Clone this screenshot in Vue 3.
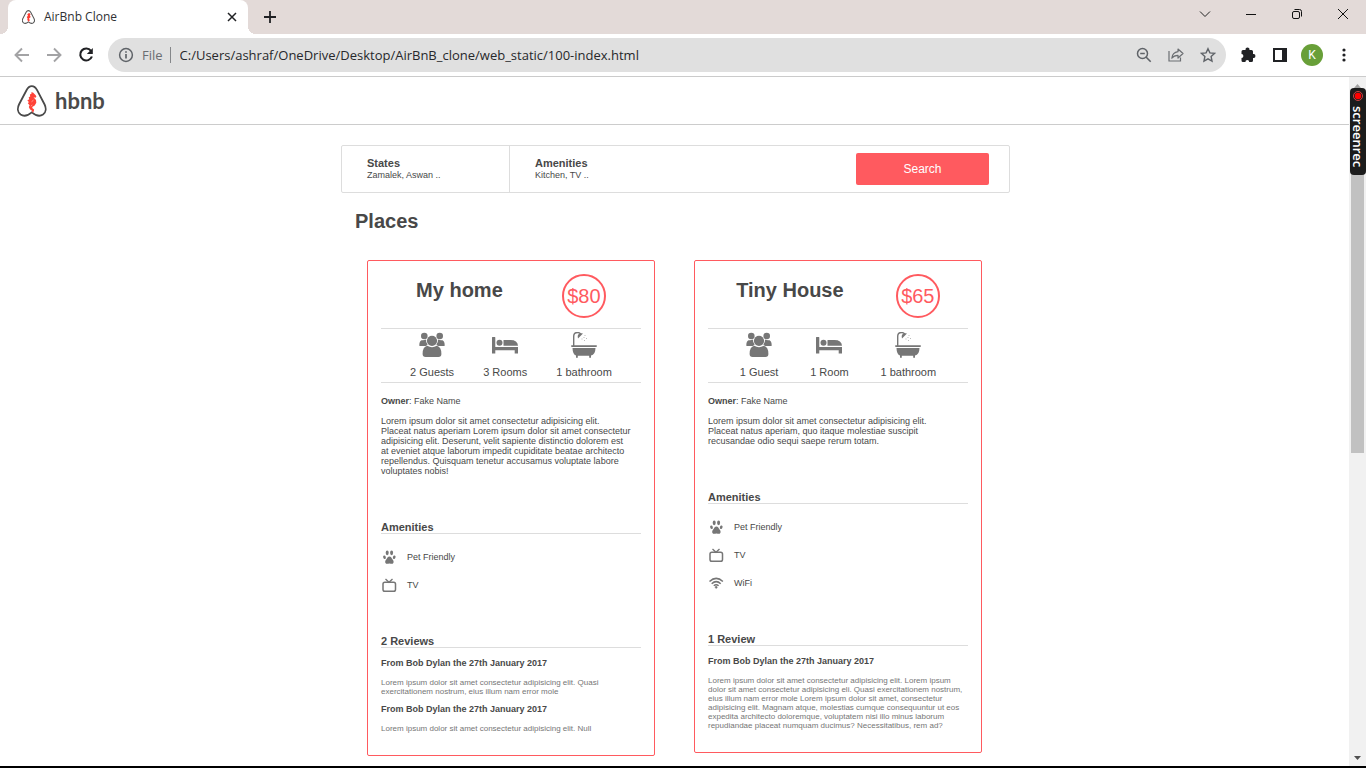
<script setup>
import { ref } from 'vue'

const address = ref('C:/Users/ashraf/OneDrive/Desktop/AirBnB_clone/web_static/100-index.html')

const places = [
  {
    name: 'My home',
    price: '$80',
    guests: '2 Guests',
    rooms: '3 Rooms',
    baths: '1 bathroom',
    description: [
      'Lorem ipsum dolor sit amet consectetur adipisicing elit.',
      'Placeat natus aperiam Lorem ipsum dolor sit amet consectetur',
      'adipisicing elit. Deserunt, velit sapiente distinctio dolorem est',
      'at eveniet atque laborum impedit cupiditate beatae architecto',
      'repellendus. Quisquam tenetur accusamus voluptate labore',
      'voluptates nobis!'
    ],
    amenities: [
      { icon: 'pet', label: 'Pet Friendly' },
      { icon: 'tv', label: 'TV' }
    ],
    reviewTitle: '2 Reviews',
    reviews: [
      {
        from: 'From Bob Dylan the 27th January 2017',
        text: [
          'Lorem ipsum dolor sit amet consectetur adipisicing elit. Quasi',
          'exercitationem nostrum, eius illum nam error mole'
        ]
      },
      {
        from: 'From Bob Dylan the 27th January 2017',
        text: ['Lorem ipsum dolor sit amet consectetur adipisicing elit. Null']
      }
    ]
  },
  {
    name: 'Tiny House',
    price: '$65',
    guests: '1 Guest',
    rooms: '1 Room',
    baths: '1 bathroom',
    description: [
      'Lorem ipsum dolor sit amet consectetur adipisicing elit.',
      'Placeat natus aperiam, quo itaque molestiae suscipit',
      'recusandae odio sequi saepe rerum totam.'
    ],
    amenities: [
      { icon: 'pet', label: 'Pet Friendly' },
      { icon: 'tv', label: 'TV' },
      { icon: 'wifi', label: 'WiFi' }
    ],
    reviewTitle: '1 Review',
    reviews: [
      {
        from: 'From Bob Dylan the 27th January 2017',
        text: [
          'Lorem ipsum dolor sit amet consectetur adipisicing elit. Lorem ipsum',
          'dolor sit amet consectetur adipisicing eli. Quasi exercitationem nostrum,',
          'eius illum nam error mole Lorem ipsum dolor sit amet, consectetur',
          'adipisicing elit. Magnam atque, molestias cumque consequuntur ut eos',
          'expedita architecto doloremque, voluptatem nisi illo minus laborum',
          'repudiandae placeat numquam ducimus? Necessitatibus, rem ad?'
        ]
      }
    ]
  }
]
</script>

<template>
  <div class="window">
    <div class="tabstrip">
      <div class="tab">
        <svg class="favicon" viewBox="0 0 30 32" width="13" height="14">
          <path d="M14.800 1.300C12 1.300 10.800 2.800 9.500 5.300L2 19.500C.2 23.200.6 27.500 3.600 29.600c3.200 2.100 7.400 1 11.200-2.200 3.800 3.200 8 4.300 11.200 2.200 3-2.100 3.400-6.400 1.600-10.100L20.100 5.300c-1.300-2.500-2.500-4-5.300-4z" fill="#fff" stroke="#555" stroke-width="2.400" />
          <path d="M14 8l3-1.500 3 3.500-2 2 2 4-4 4 2 3-2 4-4-4 1-3-2-4 3-3-2-2z" fill="#ff3b2f" />
        </svg>
        <span class="tab-title">AirBnb Clone</span>
        <button class="tab-close" aria-label="Close tab">
          <svg viewBox="0 0 10 10" width="10" height="10"><path d="M1 1l8 8M9 1L1 9" stroke="#202124" stroke-width="1.500" /></svg>
        </button>
      </div>
      <button class="new-tab" aria-label="New tab">
        <svg viewBox="0 0 12 12" width="12" height="12"><path d="M6 0v12M0 6h12" stroke="#202124" stroke-width="1.800" /></svg>
      </button>
      <div class="controls">
        <button aria-label="Search tabs"><svg viewBox="0 0 12 12" width="12" height="12"><path d="M1 3.500l5 5 5-5" fill="none" stroke="#222" stroke-width="1" /></svg></button>
        <button aria-label="Minimize"><svg viewBox="0 0 12 12" width="12" height="12"><path d="M1 6.500h10" stroke="#111" /></svg></button>
        <button aria-label="Restore"><svg viewBox="0 0 12 12" width="12" height="12"><rect x="1.500" y="3.500" width="7" height="7" rx="1.500" fill="none" stroke="#111" /><path d="M3.500 1.500h5a2 2 0 0 1 2 2v5" fill="none" stroke="#111" /></svg></button>
        <button aria-label="Close"><svg viewBox="0 0 12 12" width="12" height="12"><path d="M1 1l10 10M11 1L1 11" stroke="#111" stroke-width="1" /></svg></button>
      </div>
    </div>

    <div class="toolbar">
      <div class="nav">
        <button aria-label="Back"><svg viewBox="0 0 16 16" width="16" height="16"><path d="M15 8H2M8 1.500L1.500 8 8 14.500" fill="none" stroke="#a3a3a5" stroke-width="1.900" /></svg></button>
        <button aria-label="Forward"><svg viewBox="0 0 16 16" width="16" height="16"><path d="M1 8h13M8 1.500L14.500 8 8 14.500" fill="none" stroke="#a3a3a5" stroke-width="1.900" /></svg></button>
        <button aria-label="Reload"><svg viewBox="0 0 16 16" width="16" height="16"><path d="M13 3.800A6 6 0 1 0 13.900 9.500" fill="none" stroke="#202124" stroke-width="2.100" /><path d="M14.800 1v6h-6z" fill="#202124" /></svg></button>
      </div>
      <div class="omnibox">
        <svg viewBox="0 0 16 16" width="16" height="16"><circle cx="8" cy="8" r="6.400" fill="none" stroke="#5f6368" stroke-width="1.500" /><path d="M8 7v4.500M8 4.200v1.600" stroke="#5f6368" stroke-width="1.700" /></svg>
        <label class="scheme" for="address">File</label>
        <input id="address" v-model="address" class="address" type="text" spellcheck="false">
        <div class="omni-actions">
          <button aria-label="Zoom out"><svg viewBox="0 0 16 16" width="16" height="16"><circle cx="6.500" cy="6.500" r="5" fill="none" stroke="#5f6368" stroke-width="1.500" /><path d="M4.200 6.500h4.600M10 10l4.700 4.700" stroke="#5f6368" stroke-width="1.600" /></svg></button>
          <button aria-label="Share"><svg viewBox="0 0 16 16" width="16" height="16"><path d="M1 4v10h11.500v-3.500" fill="none" stroke="#6b6e72" stroke-width="1.200" /><path d="M10 2l5 4.500L10 11V8.300C7 8.300 5.200 9.200 3.800 11.200 4.200 7.800 6.300 5.200 10 4.700z" fill="none" stroke="#6b6e72" stroke-width="1.200" stroke-linejoin="round" /></svg></button>
          <button aria-label="Bookmark"><svg viewBox="0 0 16 16" width="16" height="16"><path d="M8 1.700l1.900 4.200 4.600.5-3.400 3.100.9 4.600L8 11.800l-4 2.300.9-4.600L1.500 6.400l4.600-.5z" fill="none" stroke="#5f6368" stroke-width="1.400" /></svg></button>
        </div>
      </div>
      <div class="tools">
        <button aria-label="Extensions"><svg viewBox="0 0 16 16" width="16" height="16"><path d="M1.500 4.500Q1.500 3 3 3h2.600a2 2 0 1 1 3.800 0h2.100Q13 3 13 4.500v2.600a2 2 0 1 1 0 3.900v2.500q0 1.500-1.500 1.500H9.200a1.900 1.900 0 0 0-3.800 0H3q-1.500 0-1.500-1.500v-2.600a1.900 1.900 0 0 0 0-3.800z" fill="#202124" /></svg></button>
        <button aria-label="Side panel"><svg viewBox="0 0 14 14" width="14" height="14"><path d="M0 0h14v14H0zM2 2v10h7V2z" fill="#202124" fill-rule="evenodd" /></svg></button>
        <button class="avatar" aria-label="Profile">K</button>
        <button aria-label="Menu"><svg viewBox="0 0 4 14" width="4" height="14"><circle cx="2" cy="2" r="1.600" fill="#202124" /><circle cx="2" cy="7" r="1.600" fill="#202124" /><circle cx="2" cy="12" r="1.600" fill="#202124" /></svg></button>
      </div>
    </div>

    <div class="viewport">
      <div class="page">
        <header class="site-header">
          <svg viewBox="0 0 30 32" width="30" height="32">
            <path d="M14.800 1.200C12 1.200 10.800 2.800 9.500 5.200L2 19.500C.2 23.200.6 27.500 3.600 29.600c3.200 2.100 7.400 1 11.200-2.200 3.800 3.200 8 4.300 11.200 2.200 3-2.100 3.400-6.400 1.600-10.100L20.100 5.200c-1.300-2.400-2.500-4-5.300-4z" fill="#fff" stroke="#4a4a4a" stroke-width="1.800" />
            <path d="M14.300 7.200l1.700.4 2.700 2.700.7 1.500-.9 1-2-.5 2.500 2.800.3 2.700-1.600 2.600-2.500 1.500.3 1.300 1.600 1.400-.3 1.900-1.800 1.300.2-1.800-2.300-1.700-1.100-2.300.8-1.700-1.800-2 1.100-1.300-1.600-1.600 1.900-1.200-.5-2 1.500-.7-.3-1.900 1.600-.8z" fill="#ff4338" />
            <path d="M14.500 16.800l2-1.700M13.800 21.200l1.500-1.200" stroke="#ffd4cf" stroke-width=".6" />
          </svg>
          <span class="brand">hbnb</span>
        </header>

        <main class="content">
          <section class="filters">
            <div class="filter states">
              <h3>States</h3>
              <h4>Zamalek, Aswan ..</h4>
            </div>
            <div class="filter">
              <h3>Amenities</h3>
              <h4>Kitchen, TV ..</h4>
            </div>
            <button class="search">Search</button>
          </section>

          <h1>Places</h1>
          <section class="places">
            <article v-for="place in places" :key="place.name" class="place">
              <div class="headline">
                <h2>{{ place.name }}</h2>
                <div class="price">{{ place.price }}</div>
              </div>
              <div class="facts">
                <div class="fact">
                  <svg viewBox="0 0 26 26" width="26" height="26" fill="#767676">
                    <circle cx="5.300" cy="4" r="3.300" /><circle cx="20.700" cy="4" r="3.300" />
                    <path d="M2.500 8.200q-2.200 1-2.200 5 0 .9.900.9h5.400Q8 13.700 8.600 12.500 6.700 10.500 7 7.600q-2 1-4.500.6zM23.500 8.200q2.200 1 2.200 5 0 .9-.9.900h-5.400q-1.400-.4-2-1.600 1.900-2 1.600-4.900 2 1 4.500.6z" />
                    <circle cx="13" cy="8.800" r="5.100" />
                    <path d="M8.200 13.800q4.800 2.800 9.600 0 4.600 1 4.600 8.200 0 3-3 3H6.600q-3 0-3-3 0-7.200 4.600-8.200z" />
                  </svg>
                  <span>{{ place.guests }}</span>
                </div>
                <div class="fact">
                  <svg viewBox="0 0 26 26" width="26" height="26" fill="#767676">
                    <path d="M0 5.500Q0 5 .5 5h2.300q.5 0 .5.500V15H26v6.500h-3.300v-3.200H3.300v3.200H0z" />
                    <circle cx="7.500" cy="10.700" r="3" />
                    <path d="M11.500 8h7q7 0 7.500 5.700H11.500z" />
                  </svg>
                  <span>{{ place.rooms }}</span>
                </div>
                <div class="fact">
                  <svg viewBox="0 0 26 26" width="26" height="26" fill="#767676">
                    <path d="M2.700 14V4.500q0-4 3.800-4 2.300 0 3.200 1.600" fill="none" stroke="#767676" stroke-width="1.400" />
                    <path d="M12 1.500L7 6.500Q6 3 8.200 1.800 10 .8 12 1.500z" />
                    <path d="M10.500 7h1M12.500 5.500h1M13.500 3.500h1M13 8.500h1M15 6.500h1" stroke="#bbb" />
                    <rect y="13.200" width="26" height="1.700" rx=".8" />
                    <path d="M1.500 16h23q-.2 7-4.500 7.500v2.300h-1.800v-2.100H6.800v2.100H5v-2.300Q1.700 22.500 1.500 16z" />
                  </svg>
                  <span>{{ place.baths }}</span>
                </div>
              </div>
              <p class="owner"><b>Owner</b>: Fake Name</p>
              <p class="description">{{ place.description.join('\n') }}</p>

              <h3 class="section-title">Amenities</h3>
              <ul class="amenities">
                <li v-for="item in place.amenities" :key="item.label">
                  <svg v-if="item.icon === 'pet'" viewBox="0 0 16 16" width="16" height="16" fill="#767676">
                    <ellipse cx="6.200" cy="3.800" rx="1.500" ry="2.400" /><ellipse cx="10.600" cy="3.800" rx="1.500" ry="2.400" />
                    <ellipse cx="3.500" cy="8.200" rx="1.300" ry="1.800" transform="rotate(-20 3.500 8.200)" /><ellipse cx="13.200" cy="8.200" rx="1.300" ry="1.800" transform="rotate(20 13.200 8.200)" />
                    <path d="M8.400 7.400c1.600 0 2 1.400 3 2.800 1.300 1.500 1.500 2.600.9 3.800-.8 1.500-2.300.5-3.900.5s-3.100 1-3.900-.5c-.6-1.200-.4-2.300.9-3.800 1-1.400 1.400-2.800 3-2.800z" />
                  </svg>
                  <svg v-else-if="item.icon === 'tv'" viewBox="0 0 16 16" width="16" height="16">
                    <rect x="2" y="5.300" width="12.500" height="9" rx="1.800" fill="none" stroke="#767676" stroke-width="1.500" />
                    <path d="M4.500 2l3.500 3.300L11.500 2" fill="none" stroke="#767676" stroke-width="1.300" />
                  </svg>
                  <svg v-else viewBox="0 0 16 16" width="16" height="16" fill="none" stroke="#767676" stroke-width="1.500">
                    <path d="M1.500 6.500q6.700-6.200 13.400 0M3.700 8.700q4.500-4.100 9 0M5.800 10.800q2.400-2.100 4.800 0" />
                    <circle cx="8.200" cy="12.300" r="1" fill="#767676" stroke-width=".6" />
                  </svg>
                  <span>{{ item.label }}</span>
                </li>
              </ul>

              <h3 class="section-title">{{ place.reviewTitle }}</h3>
              <ul class="reviews">
                <li v-for="(review, i) in place.reviews" :key="i">
                  <h4>{{ review.from }}</h4>
                  <p>{{ review.text.join('\n') }}</p>
                </li>
              </ul>
            </article>
          </section>
        </main>
      </div>
      <div class="scrollbar">
        <svg class="arrow" viewBox="0 0 7 4" width="7" height="4"><path d="M0 4h7L3.500 0z" fill="#a3a3a3" /></svg>
        <div class="thumb"></div>
        <svg class="arrow" viewBox="0 0 7 4" width="7" height="4"><path d="M0 0h7L3.500 4z" fill="#505050" /></svg>
        <div class="recorder">
          <svg viewBox="0 0 10 10" width="10" height="10"><circle cx="5" cy="5" r="4.500" fill="none" stroke="#e04848" stroke-width=".9" /><circle cx="5" cy="5" r="3.200" fill="#f00" /></svg>
          <span>screenrec</span>
        </div>
      </div>
    </div>
  </div>
</template>

<style>
body {
  margin: 0;
  overflow: hidden;
}
</style>

<style scoped>
* {
  box-sizing: border-box;
}

h1, h2, h3, h4, p, ul {
  margin: 0;
  padding: 0;
}

ul {
  list-style: none;
}

svg {
  display: block;
  flex: none;
}

button {
  display: flex;
  align-items: center;
  justify-content: center;
  padding: 0;
  border: 0;
  background: none;
}

.window {
  display: flex;
  flex-direction: column;
  height: 100vh;
  border-bottom: 2px solid #000;
  background: #fff;
  font-family: "Liberation Sans", Arial, sans-serif;
  color: #484848;
}

.tabstrip {
  display: flex;
  flex: none;
  height: 34px;
  padding-left: 8px;
  background: #e3dad8;
  font-family: "Open Sans", "Segoe UI", sans-serif;
}

.tab {
  position: relative;
  display: flex;
  align-items: center;
  width: 240px;
  padding: 0 11px 0 14px;
  border-radius: 8px 8px 0 0;
  background: #fff;
}

.tab::before,
.tab::after {
  content: "";
  position: absolute;
  bottom: 0;
  width: 8px;
  height: 8px;
}

.tab::before {
  left: -8px;
  background: radial-gradient(circle at 0 0, #e3dad8 8px, #fff 8px);
}

.tab::after {
  right: -8px;
  background: radial-gradient(circle at 100% 0, #e3dad8 8px, #fff 8px);
}

.tab-title {
  flex: 1;
  margin-left: 9px;
  font-size: 12px;
  line-height: 16px;
  color: #303134;
}

.new-tab {
  width: 28px;
  margin-left: 8px;
}

.controls {
  display: flex;
  height: 28px;
  margin-left: auto;
}

.controls button {
  width: 46px;
}

.toolbar {
  display: flex;
  align-items: center;
  flex: none;
  height: 43px;
  border-bottom: 1px solid #cbcbcb;
  font-family: "Open Sans", "Segoe UI", sans-serif;
}

.nav {
  display: flex;
  gap: 16px;
  padding: 0 14px;
}

.omnibox {
  display: flex;
  align-items: center;
  flex: 1;
  height: 34px;
  padding: 0 10px;
  border-radius: 17px;
  background: #e0e0e0;
}

.scheme {
  margin-left: 8px;
  padding-right: 7px;
  border-right: 1px solid #85878a;
  font-size: 13px;
  line-height: 16px;
  color: #6a6d71;
}

.address {
  flex: 1;
  min-width: 0;
  padding: 0 0 0 9px;
  border: 0;
  outline: 0;
  background: none;
  font: 13px/18px "Open Sans", "Segoe UI", sans-serif;
  color: #27282b;
}

.omni-actions {
  display: flex;
  gap: 16px;
}

.tools {
  display: flex;
  align-items: center;
  padding: 0 6px;
}

.tools button {
  width: 32px;
  height: 22px;
}

.tools .avatar {
  width: 22px;
  margin: 0 5px;
  border-radius: 50%;
  background: #689f38;
  font: 12px/22px Roboto, sans-serif;
  color: #fff;
}

.viewport {
  display: flex;
  flex: 1;
  min-height: 0;
}

.page {
  flex: 1;
  overflow: hidden;
}

.site-header {
  display: flex;
  align-items: center;
  gap: 8px;
  height: 48px;
  padding-left: 17px;
  border-bottom: 1px solid #ccc;
}

.brand {
  font: 700 22px/24px Lato, sans-serif;
  color: #4a4a4a;
}

.content {
  max-width: 671px;
  margin: 20px auto 0;
  padding-left: 2px;
}

.filters {
  display: flex;
  align-items: center;
  height: 48px;
  padding-right: 20px;
  border: 1px solid #ddd;
  border-radius: 2px;
}

.filter {
  display: flex;
  flex-direction: column;
  justify-content: center;
  height: 100%;
  padding-left: 25px;
}

.states {
  width: 168px;
  border-right: 1px solid #ddd;
}

.filter h3 {
  font-size: 11px;
  line-height: 13px;
}

.filter h4 {
  font-size: 9px;
  font-weight: 400;
  line-height: 11px;
}

.search {
  width: 133px;
  height: 32px;
  margin-left: auto;
  border-radius: 2px;
  background: #ff5a5f;
  font: 12px/16px "Liberation Sans", Arial, sans-serif;
  color: #fff;
}

h1 {
  margin: 16px 0 0 14px;
  font-size: 20px;
  line-height: 24px;
}

.places {
  display: flex;
  align-items: flex-start;
  gap: 39px;
  padding: 27px 26px 0;
}

.place {
  flex: 0 0 288px;
  padding: 0 13px 22px;
  border: 1px solid #ff5a5f;
  border-radius: 2px;
}

.headline {
  display: flex;
  justify-content: space-evenly;
  gap: 24px;
  height: 68px;
  padding-top: 13px;
  border-bottom: 1px solid #ddd;
}

h2 {
  font-size: 20px;
  line-height: 32px;
}

.price {
  display: flex;
  justify-content: center;
  width: 44px;
  height: 44px;
  border: 2px solid #ff5a5f;
  border-radius: 50%;
  font-size: 20px;
  line-height: 40px;
  color: #ff5a5f;
}

.facts {
  display: flex;
  justify-content: space-evenly;
  height: 54px;
  padding-top: 3px;
  border-bottom: 1px solid #ddd;
}

.fact {
  display: flex;
  flex-direction: column;
  align-items: center;
  gap: 8px;
  font-size: 11px;
  line-height: 12px;
}

.owner,
.description,
.amenities {
  font-size: 9px;
  line-height: 10px;
}

.owner {
  margin-top: 13px;
}

.description {
  margin: 10px 0 45px;
  white-space: pre;
}

.section-title {
  border-bottom: 1px solid #ddd;
  font-size: 11px;
  line-height: 12px;
}

.amenities {
  margin: 9px 0 36px;
}

.amenities li {
  display: flex;
  align-items: center;
  gap: 10px;
  height: 28px;
}

.reviews {
  display: flex;
  flex-direction: column;
  gap: 8px;
  margin-top: 10px;
}

.reviews h4 {
  margin-bottom: 10px;
  font-size: 9px;
  line-height: 10px;
}

.reviews p {
  font-size: 8px;
  line-height: 9px;
  white-space: pre;
  color: #767676;
}

.scrollbar {
  position: relative;
  display: flex;
  flex: 0 0 17px;
  flex-direction: column;
  align-items: center;
  padding: 7px 0 6px;
  background: #f1f1f1;
}

.thumb {
  width: 13px;
  height: 359px;
  margin: 6px 0 auto;
  background: #c1c1c1;
}

.recorder {
  position: absolute;
  top: 11px;
  right: 0;
  display: flex;
  flex-direction: column;
  align-items: center;
  gap: 5px;
  width: 16px;
  height: 87px;
  padding-top: 3px;
  border-radius: 4px;
  background: #1c1c1c;
  font: 600 13px/16px "Open Sans", sans-serif;
  color: #fff;
}

.recorder span {
  writing-mode: vertical-rl;
}
</style>
